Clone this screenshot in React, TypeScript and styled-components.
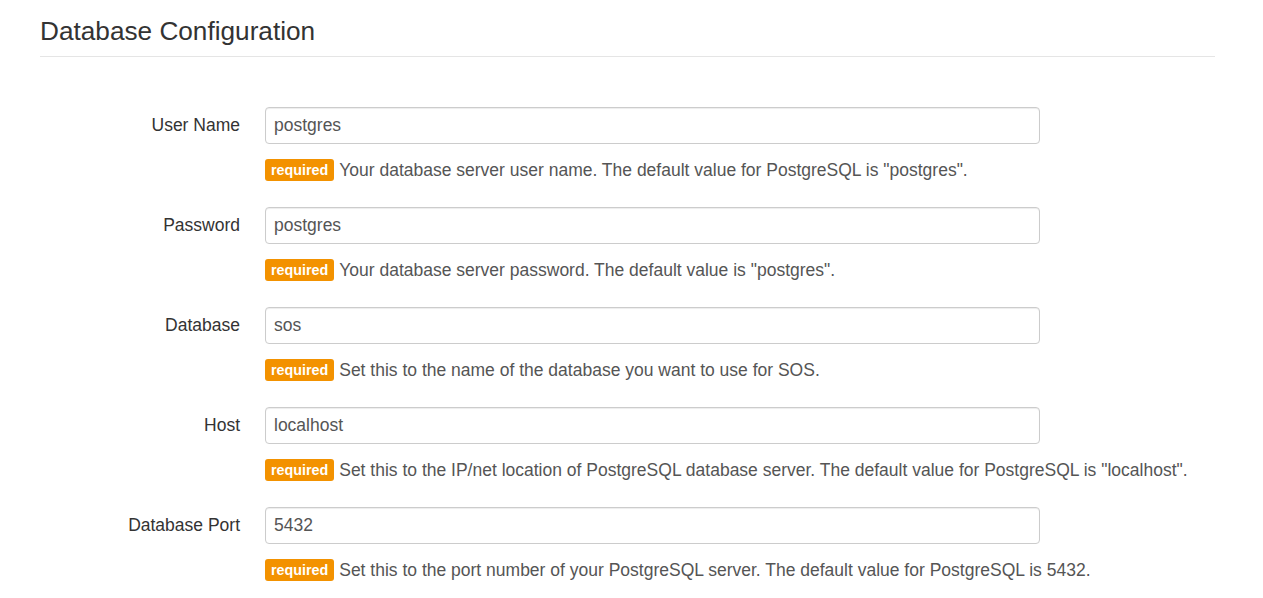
import React from "react";
import styled, { createGlobalStyle } from "styled-components";

const Global = createGlobalStyle`
  html, body { margin: 0; padding: 0; background: #fff; }
  body { font-family: "Liberation Sans", Arial, Helvetica, sans-serif; color: #333; }
  * { box-sizing: border-box; }
`;

const Page = styled.div`
  padding: 0 48px 0 40px;
`;

const Title = styled.h2`
  margin: 0;
  padding: 16px 0 10px;
  font-size: 26.2px;
  font-weight: 400;
  line-height: 30px;
  color: #333;
  border-bottom: 1px solid #e5e5e5;
`;

const Form = styled.form`
  display: flex;
  flex-direction: column;
  padding-top: 50px;
`;

const Row = styled.div`
  display: grid;
  grid-template-columns: 225px 775px;
  margin-bottom: 24px;
`;

const Label = styled.label`
  text-align: right;
  padding-right: 25px;
  padding-top: 5px;
  font-size: 17.5px;
  line-height: 26px;
  color: #333;
`;

const Field = styled.div`
  display: flex;
  flex-direction: column;
`;

const Input = styled.input`
  height: 37px;
  width: 100%;
  padding: 6px 8px;
  font-family: inherit;
  font-size: 17.5px;
  color: #555;
  border: 1px solid #ccc;
  border-radius: 4px;
  box-shadow: inset 0 1px 1px rgba(0, 0, 0, 0.075);
  outline: none;
`;

const Help = styled.p`
  margin: 13px 0 0;
  font-size: 17.5px;
  line-height: 26px;
  color: #555;
  white-space: nowrap;
`;

const Badge = styled.span`
  display: inline-block;
  background: #f39200;
  color: #fff;
  font-weight: 700;
  font-size: 14.3px;
  line-height: 16px;
  padding: 3px 6px 3px;
  border-radius: 3px;
  margin-right: 5px;
  vertical-align: 1px;
`;

const fields = [
  { label: "User Name", value: "postgres", help: 'Your database server user name. The default value for PostgreSQL is "postgres".' },
  { label: "Password", value: "postgres", help: 'Your database server password. The default value is "postgres".' },
  { label: "Database", value: "sos", help: "Set this to the name of the database you want to use for SOS." },
  { label: "Host", value: "localhost", help: 'Set this to the IP/net location of PostgreSQL database server. The default value for PostgreSQL is "localhost".' },
  { label: "Database Port", value: "5432", help: "Set this to the port number of your PostgreSQL server. The default value for PostgreSQL is 5432." },
];

export default function App() {
  return (
    <Page>
      <Global />
      <Title>Database Configuration</Title>
      <Form>
        {fields.map((f) => (
          <Row key={f.label}>
            <Label>{f.label}</Label>
            <Field>
              <Input defaultValue={f.value} />
              <Help>
                <Badge>required</Badge>
                {f.help}
              </Help>
            </Field>
          </Row>
        ))}
      </Form>
    </Page>
  );
}
